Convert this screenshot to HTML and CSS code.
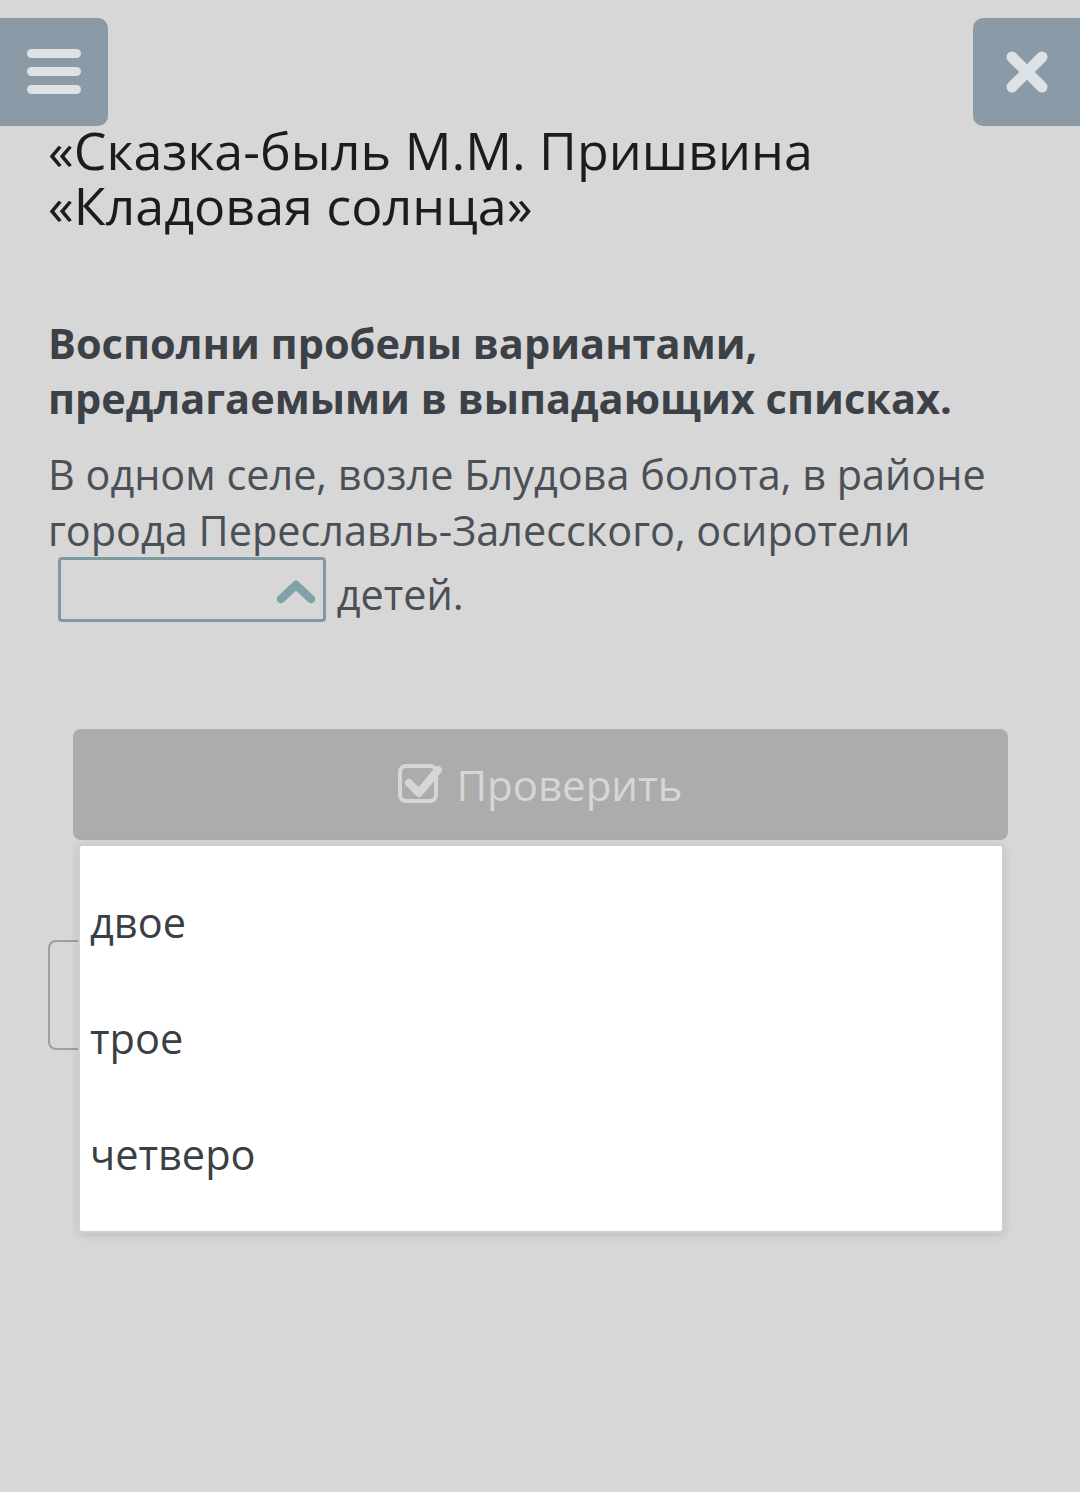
FILE: index.html
```html
<!DOCTYPE html>
<html lang="ru">
<head>
<meta charset="utf-8">
<link rel="stylesheet" href="styles.css">
</head>
<body>
<div class="page">
  <div class="topbar">
    <div class="btn-menu">
      <svg width="54" height="46" viewBox="0 0 54 46"><g fill="#dde2e6"><rect x="0" y="0" width="54" height="9" rx="4.5"/><rect x="0" y="18" width="54" height="9" rx="4.5"/><rect x="0" y="36" width="54" height="9" rx="4.5"/></g></svg>
    </div>
    <div class="btn-close">
      <svg width="44" height="44" viewBox="0 0 44 44"><g stroke="#dde2e6" stroke-width="11" stroke-linecap="round"><line x1="7" y1="7" x2="37" y2="37"/><line x1="37" y1="7" x2="7" y2="37"/></g></svg>
    </div>
  </div>
  <h1 class="title">«Сказка-быль М.М. Пришвина<br>«Кладовая солнца»</h1>
  <p class="task">Восполни пробелы вариантами, предлагаемыми в выпадающих списках.</p>
  <p class="text">В одном селе, возле Блудова болота, в районе города Переславль-Залесского, осиротели<br><span class="select"><svg class="chev" width="40" height="26" viewBox="0 0 40 26"><polyline points="5,20 20,6 35,20" fill="none" stroke="#7fa1a7" stroke-width="8.5" stroke-linecap="round" stroke-linejoin="round"/></svg></span> детей.</p>
  <div class="check-wrap">
    <div class="check-btn">
      <svg width="46" height="46" viewBox="0 0 46 46"><rect x="2" y="7" width="36" height="35" rx="6" fill="none" stroke="#d6d6d6" stroke-width="4"/><polyline points="11,24 21,34 40,11" fill="none" stroke="#d6d6d6" stroke-width="8" stroke-linecap="round" stroke-linejoin="round"/></svg>
      <span>Проверить</span>
    </div>
    <div class="under-box"></div>
    <ul class="options">
      <li>двое</li>
      <li>трое</li>
      <li>четверо</li>
    </ul>
  </div>
</div>
</body>
</html>
```

FILE: styles.css
```css
html, body { margin: 0; padding: 0; }
body {
  background: #d7d7d7;
  font-family: "Open Sans", "Noto Sans", sans-serif;
  width: 1080px;
  height: 1492px;
  overflow: hidden;
}
.page { position: relative; }
.topbar {
  display: flex;
  justify-content: space-between;
  padding-top: 18px;
  height: 108px;
}
.btn-menu {
  width: 108px;
  height: 108px;
  background: #8a9ba7;
  border-radius: 0 10px 10px 0;
  display: flex;
  align-items: center;
  justify-content: center;
}
.btn-close {
  width: 107px;
  height: 108px;
  background: #8a9ba7;
  border-radius: 10px 0 0 10px;
  display: flex;
  align-items: center;
  justify-content: center;
}
.title {
  margin: -4px 0 0 48px;
  font-weight: 400;
  font-size: 52px;
  line-height: 55px;
  color: #1c1c1c;
}
.task {
  margin: 84px 20px 0 48px;
  font-weight: 700;
  font-size: 41.5px;
  line-height: 55px;
  color: #3b4147;
}
.text {
  margin: 20px 16px 0 48px;
  font-size: 41.4px;
  line-height: 56px;
  color: #4a5056;
}
.select {
  display: inline-block;
  vertical-align: -12px;
  box-sizing: border-box;
  width: 268px;
  height: 65px;
  margin: -1px 0 0 10px;
  border: 3px solid #7d9ba1;
  border-radius: 4px;
  position: relative;
}
.chev {
  position: absolute;
  right: 7px;
  top: 19px;
}
.check-wrap {
  position: relative;
  margin: 107px 72px 0 73px;
}
.check-btn {
  height: 111px;
  background: #acacac;
  border-radius: 8px;
  display: flex;
  align-items: center;
  justify-content: center;
  gap: 12px;
  color: #d6d6d6;
  font-size: 42px;
}
.check-btn svg { margin-top: -6px; }
.under-box {
  position: absolute;
  left: -25px;
  top: 211px;
  width: 100px;
  height: 110px;
  border: 2px solid #9aa0a4;
  border-right: none;
  border-radius: 8px 0 0 8px;
  box-sizing: border-box;
}
.options {
  position: absolute;
  left: 5px;
  right: 4px;
  top: 115px;
  margin: 0;
  padding: 18px 0 0 0;
  list-style: none;
  background: #fff;
  border: 2px solid #c6d2d6;
  border-radius: 4px;
  height: 389px;
  box-sizing: border-box;
  box-shadow: 0 2px 10px rgba(0,0,0,0.12);
}
.options li {
  font-size: 41.5px;
  line-height: 116px;
  height: 116px;
  padding-left: 10px;
  color: #3a3f45;
}
```
